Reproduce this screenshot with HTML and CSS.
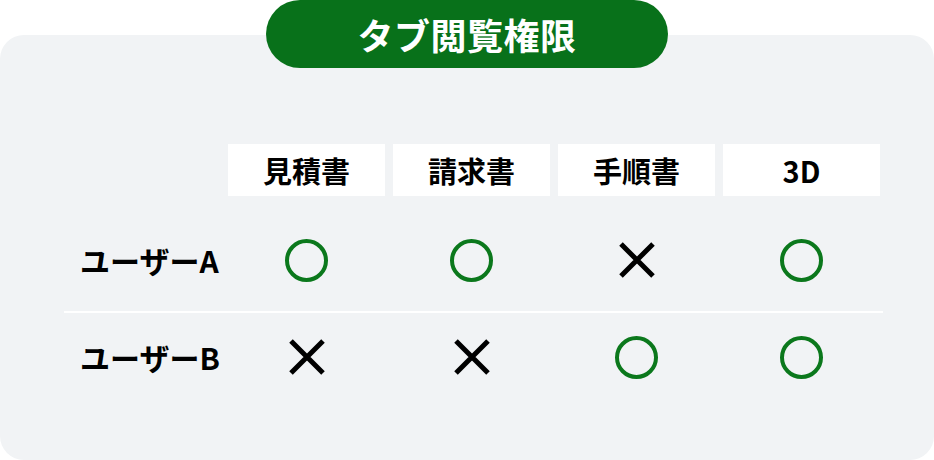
FILE: index.html
```html
<!DOCTYPE html>
<html lang="ja">
<head>
    <meta charset="UTF-8">
    <meta name="viewport" content="width=device-width, initial-scale=1.0">
    <title>タブ閲覧権限</title>
    <link rel="stylesheet" href="styles.css">
</head>
<body>
    <div class="panel">
        <div class="badge">タブ閲覧権限</div>
        <div class="card">
            <div class="row head-row">
                <div></div>
                <div class="head">見積書</div>
                <div class="head">請求書</div>
                <div class="head">手順書</div>
                <div class="head">3D</div>
            </div>
            <div class="row user-row first">
                <div class="label">ユーザーA</div>
                <div class="cell"><span class="ok"></span></div>
                <div class="cell"><span class="ok"></span></div>
                <div class="cell"><svg class="ng" viewBox="0 0 36 36"><path d="M2 2L34 34M34 2L2 34"/></svg></div>
                <div class="cell"><span class="ok"></span></div>
            </div>
            <div class="row user-row second">
                <div class="label">ユーザーB</div>
                <div class="cell"><svg class="ng" viewBox="0 0 36 36"><path d="M2 2L34 34M34 2L2 34"/></svg></div>
                <div class="cell"><svg class="ng" viewBox="0 0 36 36"><path d="M2 2L34 34M34 2L2 34"/></svg></div>
                <div class="cell"><span class="ok"></span></div>
                <div class="cell"><span class="ok"></span></div>
            </div>
        </div>
    </div>
</body>
</html>
```

FILE: styles.css
```css
body {
    margin: 0;
    background: #ffffff;
    font-family: "Noto Sans CJK JP", "Noto Sans", sans-serif;
    color: #000000;
}

.panel {
    width: 934px;
    height: 460px;
    display: flex;
    flex-direction: column;
    align-items: center;
}

.badge {
    position: relative;
    z-index: 1;
    width: 402px;
    height: 68px;
    border-radius: 34px;
    background: #08711a;
    color: #ffffff;
    font-size: 36px;
    font-weight: 700;
    letter-spacing: 0.5px;
    display: flex;
    justify-content: center;
    align-items: center;
}

.card {
    align-self: stretch;
    margin-top: -33px;
    height: 425px;
    box-sizing: border-box;
    padding: 109px 51px 0 64px;
    background: #f1f3f5;
    border-radius: 24px;
}

.row {
    display: grid;
    grid-template-columns: 156px repeat(4, 157px);
    column-gap: 8px;
    align-items: center;
}

.head-row {
    height: 52px;
}

.head {
    height: 52px;
    background: #ffffff;
    display: flex;
    justify-content: center;
    align-items: center;
    font-size: 29px;
    font-weight: 700;
}

.user-row.first {
    height: 102px;
    margin-top: 13px;
    border-bottom: 2px solid #ffffff;
}

.user-row.second {
    height: 88px;
}

.label {
    padding-left: 16px;
    font-size: 30px;
    font-weight: 700;
    white-space: nowrap;
}

.cell {
    display: flex;
    justify-content: center;
    align-items: center;
}

.ok {
    width: 35px;
    height: 35px;
    border: 4px solid #0b781c;
    border-radius: 50%;
}

.ng {
    width: 36px;
    height: 36px;
}

.ng path {
    stroke: #000000;
    stroke-width: 5;
    fill: none;
}
```
